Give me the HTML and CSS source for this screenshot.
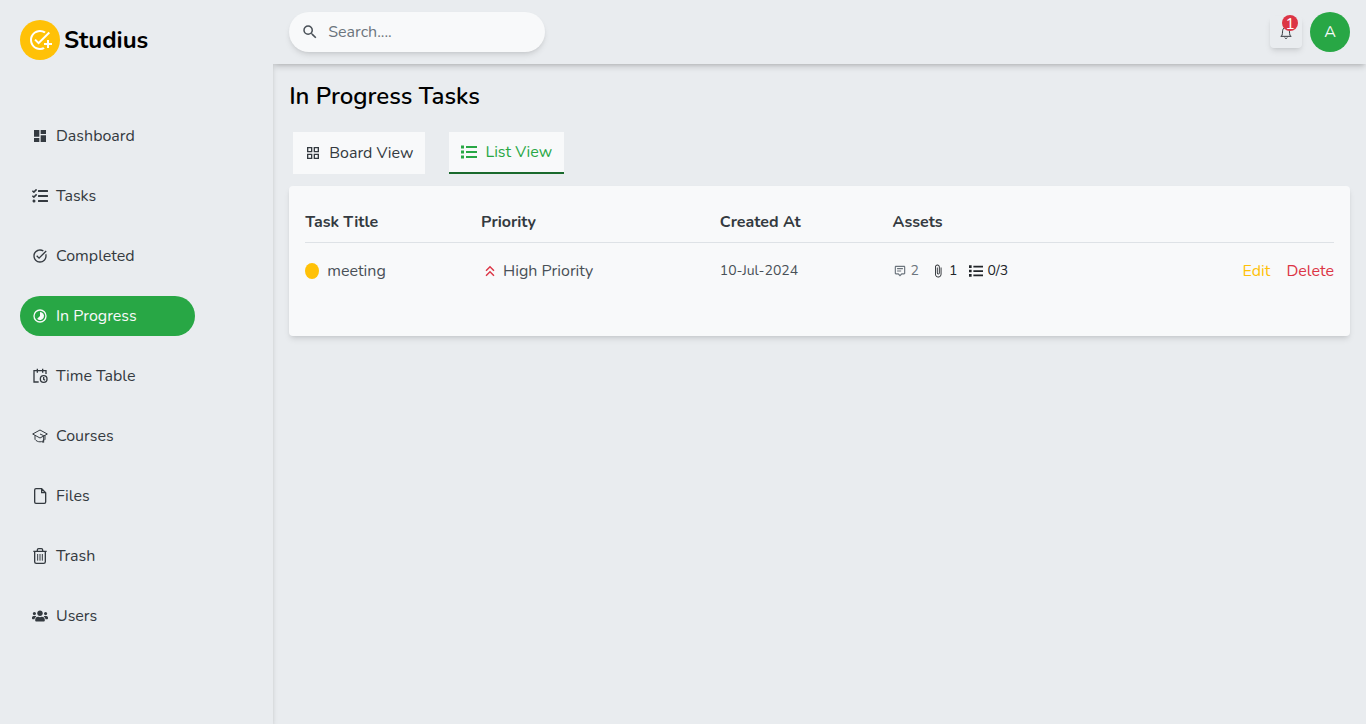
FILE: index.html
```html
<!DOCTYPE html>
<html lang="en">
<head>
<meta charset="utf-8">
<meta name="viewport" content="width=device-width, initial-scale=1">
<title>Studius</title>
<link rel="stylesheet" href="styles.css">
</head>
<body>
<div class="app">
  <aside class="sidebar">
    <h1 class="brand">
      <span class="brand-mark"><svg class="icon icon-lg" viewBox="0 0 24 24"><path d="M22 5.18 10.59 16.6l-4.24-4.24 1.41-1.41 2.83 2.83 10-10L22 5.18zM12 20c-4.41 0-8-3.59-8-8s3.59-8 8-8c1.57 0 3.04.46 4.28 1.25l1.45-1.45A10.02 10.02 0 0 0 12 2C6.48 2 2 6.48 2 12s4.48 10 10 10c1.73 0 3.36-.44 4.78-1.22l-1.5-1.5c-1 .46-2.11.72-3.28.72zm7-5h-3v2h3v3h2v-3h3v-2h-3v-3h-2v3z"/></svg></span>
      <span>Studius</span>
    </h1>
    <nav class="menu">
      <a class="menu-item" href="#"><svg class="icon" viewBox="0 0 24 24"><path d="M3 13h8V3H3v10zm0 8h8v-6H3v6zm10 0h8V11h-8v10zm0-18v6h8V3h-8z"/></svg>Dashboard</a>
      <a class="menu-item" href="#"><svg class="icon" viewBox="0 0 512 512"><path d="M139.61 35.5a12 12 0 0 0-17 0L58.93 98.81l-22.7-22.12a12 12 0 0 0-17 0L3.53 92.41a12 12 0 0 0 0 17l47.59 47.4a12.78 12.78 0 0 0 17.61 0l15.59-15.62L156.52 69a12.09 12.09 0 0 0 .09-17zm0 159.19a12 12 0 0 0-17 0l-63.68 63.72-22.7-22.1a12 12 0 0 0-17 0L3.53 252a12 12 0 0 0 0 17L51 316.5a12.77 12.77 0 0 0 17.6 0l15.7-15.69 72.2-72.22a12 12 0 0 0 .09-16.9zM64 368c-26.49 0-48.59 21.5-48.59 48S37.53 464 64 464a48 48 0 0 0 0-96zm432 16H208a16 16 0 0 0-16 16v32a16 16 0 0 0 16 16h288a16 16 0 0 0 16-16v-32a16 16 0 0 0-16-16zm0-320H208a16 16 0 0 0-16 16v32a16 16 0 0 0 16 16h288a16 16 0 0 0 16-16V80a16 16 0 0 0-16-16zm0 160H208a16 16 0 0 0-16 16v32a16 16 0 0 0 16 16h288a16 16 0 0 0 16-16v-32a16 16 0 0 0-16-16z"/></svg>Tasks</a>
      <a class="menu-item" href="#"><svg class="icon" viewBox="0 0 24 24"><path d="M22 5.18 10.59 16.6l-4.24-4.24 1.41-1.41 2.83 2.83 10-10L22 5.18zm-2.21 5.04c.13.57.21 1.17.21 1.78 0 4.42-3.58 8-8 8s-8-3.58-8-8 3.58-8 8-8c1.58 0 3.04.46 4.28 1.25l1.44-1.44A9.9 9.9 0 0 0 12 2C6.48 2 2 6.48 2 12s4.48 10 10 10 10-4.48 10-10c0-1.19-.22-2.33-.6-3.39l-1.61 1.61z"/></svg>Completed</a>
      <a class="menu-item active" href="#" aria-current="page"><svg class="icon" viewBox="0 0 24 24"><circle class="line" cx="12" cy="12" r="9"/><path d="M12 6a6 6 0 1 1-4.24 10.24L12 12V6z"/></svg>In Progress</a>
      <a class="menu-item" href="#"><svg class="icon" viewBox="0 0 24 24"><path class="line" d="M10 21H3V4h18v5M8 1v6M16 1v6"/><circle class="line" cx="17.500" cy="16.500" r="5"/><path class="line" d="M17.500 13.500v3.500l2 1.500"/></svg>Time Table</a>
      <a class="menu-item" href="#"><svg class="icon" viewBox="0 0 24 24"><path class="line thin" d="M1 9 12 3l11 6-11 6zM4.500 11v6c3.500 5 11.500 5 15 0v-6M12 9l5.500 2.500V22M17.500 17l-1.500 5"/></svg>Courses</a>
      <a class="menu-item" href="#"><svg class="icon" viewBox="0 0 24 24"><path class="line" d="M14.500 1H6a2 2 0 0 0-2 2v18a2 2 0 0 0 2 2h12.500a2 2 0 0 0 2-2V7zM14.500 1v6h6"/></svg>Files</a>
      <a class="menu-item" href="#"><svg class="icon" viewBox="0 0 24 24"><path class="line" d="M2 5h20M8 5V3c0-1 1-2 2-2h4c1 0 2 1 2 2v2M4 5v15.500A2.500 2.500 0 0 0 6.500 23h11a2.500 2.500 0 0 0 2.500-2.500V5"/><path class="line thin" d="M8.500 9v10M12 9v10M15.500 9v10"/></svg>Trash</a>
      <a class="menu-item" href="#"><svg class="icon" viewBox="0 0 640 512"><path d="M96 224c35.3 0 64-28.700 64-64s-28.700-64-64-64-64 28.700-64 64 28.700 64 64 64zm448 0c35.300 0 64-28.700 64-64s-28.700-64-64-64-64 28.700-64 64 28.700 64 64 64zm32 32h-64c-17.600 0-33.500 7.100-45.100 18.600 40.300 22.100 68.900 62 75.100 109.400h66c17.700 0 32-14.300 32-32v-32c0-35.300-28.700-64-64-64zm-256 0c61.900 0 112-50.100 112-112S381.900 32 320 32 208 82.100 208 144s50.100 112 112 112zm76.800 32h-8.300c-20.800 10-43.900 16-68.500 16s-47.600-6-68.500-16h-8.300C179.600 288 128 339.600 128 403.200V432c0 26.500 21.500 48 48 48h288c26.500 0 48-21.500 48-48v-28.800c0-63.600-51.600-115.200-115.200-115.200zm-223.700-13.400C161.500 263.100 145.600 256 128 256H64c-35.300 0-64 28.700-64 64v32c0 17.700 14.300 32 32 32h65.900c6.300-47.400 34.900-87.300 75.200-109.400z"/></svg>Users</a>
    </nav>
  </aside>

  <div class="page">
    <header class="topbar">
      <label class="search">
        <svg class="icon icon-md" viewBox="0 0 24 24"><path d="M15.500 14h-.79l-.28-.27A6.471 6.471 0 0 0 16 9.500 6.500 6.500 0 1 0 9.500 16c1.610 0 3.090-.59 4.230-1.570l.27.280v.79l5 4.990L20.490 19l-4.990-5zm-6 0C7.010 14 5 11.990 5 9.500S7.010 5 9.500 5 14 7.010 14 9.500 11.990 14 9.500 14z"/></svg>
        <input class="search-input" type="text" placeholder="Search...." aria-label="Search">
      </label>
      <div class="account">
        <button class="bell" type="button" aria-label="Notifications">
          <svg class="icon" viewBox="0 0 24 24"><path class="line thin" d="M12 3v2M4 18.500h16M5 18.500c2-2 1.500-6 2-9 .5-2.500 2-4.500 5-4.500s4.500 2 5 4.500c.5 3 0 7 2 9M10 20.500c.5 1.500 3.500 1.500 4 0"/></svg>
          <span class="badge">1</span>
        </button>
        <button class="avatar" type="button">A</button>
      </div>
    </header>

    <main class="content">
      <h2 class="title">In Progress Tasks</h2>
      <div class="tabs" role="tablist">
        <button class="tab" type="button" role="tab" aria-selected="false"><svg class="icon" viewBox="0 0 24 24"><path d="M3 3v8h8V3H3zm6 6H5V5h4v4zm-6 4v8h8v-8H3zm6 6H5v-4h4v4zm4-16v8h8V3h-8zm6 6h-4V5h4v4zm-6 4v8h8v-8h-8zm6 6h-4v-4h4v4z"/></svg>Board View</button>
        <button class="tab selected" type="button" role="tab" aria-selected="true"><svg class="icon" viewBox="0 0 512 512"><path d="M0 48h96v96H0zM0 208h96v96H0zM0 368h96v96H0zM160 64h352v64H160zM160 224h352v64H160zM160 384h352v64H160z"/></svg>List View</button>
      </div>
      <section class="card">
        <table class="tasks">
          <colgroup><col class="col-title"><col class="col-priority"><col class="col-created"><col class="col-assets"><col></colgroup>
          <thead>
            <tr><th>Task Title</th><th>Priority</th><th>Created At</th><th>Assets</th><td></td></tr>
          </thead>
          <tbody>
            <tr>
              <td><div class="cell"><span class="dot"></span>meeting</div></td>
              <td><div class="cell priority"><svg class="icon icon-md high" viewBox="0 0 24 24"><path d="M6 17.590 7.410 19 12 14.420 16.590 19 18 17.590l-6-6zM6 11l1.410 1.410L12 7.830l4.590 4.580L18 11l-6-6z"/></svg>High Priority</div></td>
              <td class="small">10-Jul-2024</td>
              <td>
                <div class="cell assets small">
                  <span class="asset muted"><svg class="icon icon-sm" viewBox="0 0 24 24"><path d="M5 3c-1.103 0-2 .897-2 2v11c0 1.103.897 2 2 2h3.586L12 21.414 15.414 18H19c1.103 0 2-.897 2-2V5c0-1.103-.897-2-2-2H5zm14 13h-4.414L12 18.586 9.414 16H5V5h14v11z"/><path d="M7 7h10v2H7zM7 11h7v2H7z"/></svg>2</span>
                  <span class="asset"><svg class="icon icon-sm" viewBox="0 0 24 24"><path d="M16.500 6v11.500c0 2.210-1.790 4-4 4s-4-1.790-4-4V5a2.500 2.500 0 0 1 5 0v10.500c0 .55-.45 1-1 1s-1-.45-1-1V6H10v9.500a2.500 2.500 0 0 0 5 0V5c0-2.210-1.790-4-4-4S7 2.790 7 5v12.500c0 3.040 2.460 5.500 5.500 5.500s5.500-2.460 5.500-5.500V6h-1.500z"/></svg>1</span>
                  <span class="asset"><svg class="icon icon-sm" viewBox="0 0 512 512"><path d="M0 48h96v96H0zM0 208h96v96H0zM0 368h96v96H0zM160 64h352v64H160zM160 224h352v64H160zM160 384h352v64H160z"/></svg>0/3</span>
                </div>
              </td>
              <td><div class="cell actions"><button class="link edit" type="button">Edit</button><button class="link delete" type="button">Delete</button></div></td>
            </tr>
          </tbody>
        </table>
      </section>
    </main>
  </div>
</div>
</body>
</html>
```
FILE: styles.css
```css
* {
  box-sizing: border-box;
}

body {
  margin: 0;
  background: #e9ecef;
  color: #343a40;
  font: 400 16px/24px Nunito, Lato, sans-serif;
}

button,
input {
  border: 0;
  padding: 0;
  background: none;
  color: inherit;
  font: inherit;
}

h1,
h2 {
  margin: 0;
}

.icon {
  width: 16px;
  height: 16px;
  flex: none;
  fill: currentColor;
}

.icon-sm { width: 14px; height: 14px; }
.icon-md { width: 18px; height: 18px; }
.icon-lg { width: 24px; height: 24px; }

.line {
  fill: none;
  stroke: currentColor;
  stroke-width: 2;
}

.thin {
  stroke-width: 1.5;
}

.app {
  display: flex;
  min-height: 100vh;
}

.sidebar {
  flex: 0 0 20%;
  padding: 20px;
  box-shadow: 0 4px 6px -1px rgba(0, 0, 0, 0.15), 0 2px 4px -2px rgba(0, 0, 0, 0.15);
}

.brand {
  display: flex;
  align-items: center;
  gap: 4px;
  color: #000;
  font-size: 24px;
  font-weight: 700;
  line-height: 32px;
}

.brand-mark {
  display: grid;
  place-items: center;
  width: 40px;
  height: 40px;
  border-radius: 50%;
  background: #ffc107;
  color: #fff;
}

.menu {
  display: flex;
  flex-direction: column;
  gap: 20px;
  margin-top: 56px;
}

.menu-item {
  display: flex;
  align-items: center;
  gap: 8px;
  width: 75%;
  height: 40px;
  padding: 0 12px;
  border-radius: 20px;
  color: #343a40;
  text-decoration: none;
}

.menu-item.active {
  background: #28a745;
  color: #f8f9fa;
}

.page {
  flex: 1;
  min-width: 0;
  overflow: hidden;
}

.topbar {
  position: relative;
  display: flex;
  align-items: center;
  justify-content: space-between;
  padding: 12px 16px;
  background: #e9ecef;
  box-shadow: 0 4px 6px -1px rgba(0, 0, 0, 0.15), 0 2px 4px -2px rgba(0, 0, 0, 0.15);
}

.search {
  display: flex;
  align-items: center;
  gap: 9px;
  width: 256px;
  height: 40px;
  padding: 0 12px;
  border-radius: 20px;
  background: #f8f9fa;
  color: #495057;
  box-shadow: 0 4px 6px -1px rgba(0, 0, 0, 0.1), 0 2px 4px -2px rgba(0, 0, 0, 0.1);
}

.search-input {
  flex: 1;
  min-width: 0;
  outline: none;
}

.search-input::placeholder {
  color: #6c757d;
}

.account {
  display: flex;
  align-items: center;
  gap: 8px;
}

.bell {
  position: relative;
  display: grid;
  place-items: center;
  width: 32px;
  height: 32px;
  border-radius: 4px;
  box-shadow: 0 4px 6px -1px rgba(0, 0, 0, 0.1), 0 2px 4px -2px rgba(0, 0, 0, 0.1);
}

.badge {
  position: absolute;
  top: -1px;
  right: 4px;
  width: 16px;
  height: 16px;
  border-radius: 50%;
  background: #dc3545;
  color: #fff;
  font-size: 16px;
  line-height: 18px;
  text-align: center;
}

.avatar {
  width: 40px;
  height: 40px;
  border-radius: 50%;
  background: #28a745;
  color: #f8f9fa;
}

.content {
  padding: 16px;
}

.title {
  color: #000;
  font-size: 24px;
  font-weight: 600;
  line-height: 32px;
}

.tabs {
  display: flex;
  gap: 24px;
  margin: 20px 4px 12px;
}

.tab {
  display: flex;
  align-items: center;
  gap: 8px;
  height: 42px;
  padding: 0 12px;
  background: #f8f9fa;
}

.tab.selected {
  border-bottom: 2px solid #19692c;
  color: #28a745;
}

.card {
  padding: 16px 16px 37px;
  border-radius: 4px;
  background: #f8f9fa;
  box-shadow: 0 4px 6px -1px rgba(0, 0, 0, 0.1), 0 2px 4px -2px rgba(0, 0, 0, 0.1);
}

.tasks {
  width: 100%;
  border-spacing: 0;
  table-layout: fixed;
  color: #495057;
}

.col-title { width: 17.1%; }
.col-priority { width: 23.2%; }
.col-created { width: 16.8%; }
.col-assets { width: 20%; }

.tasks th,
.tasks td {
  height: 56px;
  padding: 0;
  text-align: left;
}

.tasks thead th,
.tasks thead td {
  height: 41px;
  border-bottom: 1px solid #dee2e6;
  color: #343a40;
}

.cell {
  display: flex;
  align-items: center;
  gap: 8px;
}

.priority {
  gap: 4px;
}

.dot {
  width: 14px;
  height: 16px;
  border-radius: 50%;
  background: #ffc107;
}

.high {
  color: #dc3545;
}

.small {
  font-size: 14px;
}

.assets {
  gap: 12px;
  color: #212529;
}

.asset {
  display: flex;
  align-items: center;
  gap: 4px;
}

.muted {
  color: #6c757d;
}

.actions {
  justify-content: flex-end;
  gap: 16px;
}

.edit { color: #ffc107; }
.delete { color: #dc3545; }
```
